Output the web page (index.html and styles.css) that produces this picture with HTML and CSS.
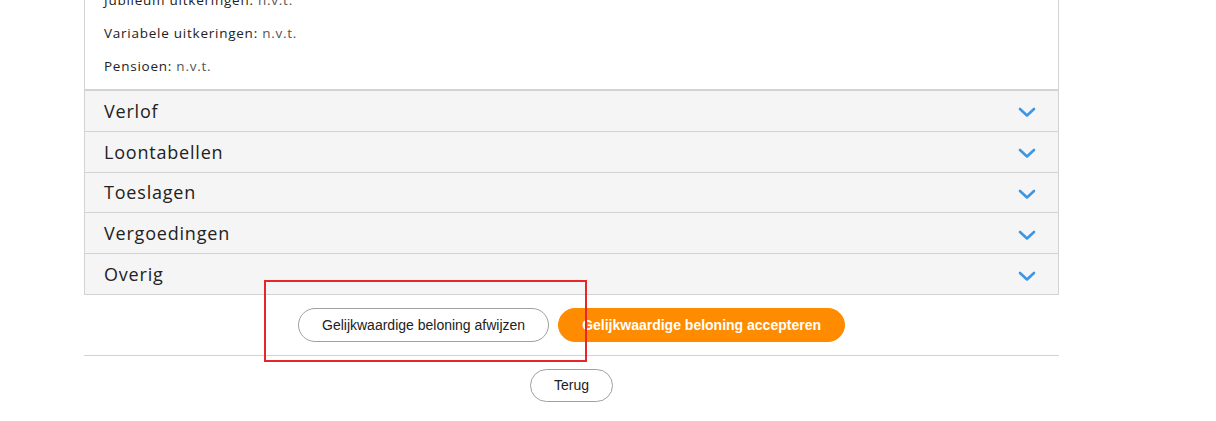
FILE: index.html
```html
<!DOCTYPE html>
<html lang="nl">
<head>
    <meta charset="UTF-8">
    <meta name="viewport" content="width=device-width, initial-scale=1.0">
    <title>Gelijkwaardige beloning</title>
    <link rel="stylesheet" href="styles.css">
</head>
<body>
    <div class="page">
        <!-- Overzicht met uitklapbare secties -->
        <div class="panel">
            <div class="details">
                <p>Jubileum uitkeringen: <span class="value">n.v.t.</span></p>
                <p>Variabele uitkeringen: <span class="value">n.v.t.</span></p>
                <p>Pensioen: <span class="value">n.v.t.</span></p>
            </div>
            <div class="section">
                <span>Verlof</span>
                <svg class="chevron" viewBox="0 0 18 11"><polyline points="2,2 9,8.5 16,2"/></svg>
            </div>
            <div class="section">
                <span>Loontabellen</span>
                <svg class="chevron" viewBox="0 0 18 11"><polyline points="2,2 9,8.5 16,2"/></svg>
            </div>
            <div class="section">
                <span>Toeslagen</span>
                <svg class="chevron" viewBox="0 0 18 11"><polyline points="2,2 9,8.5 16,2"/></svg>
            </div>
            <div class="section">
                <span>Vergoedingen</span>
                <svg class="chevron" viewBox="0 0 18 11"><polyline points="2,2 9,8.5 16,2"/></svg>
            </div>
            <div class="section">
                <span>Overig</span>
                <svg class="chevron" viewBox="0 0 18 11"><polyline points="2,2 9,8.5 16,2"/></svg>
            </div>
        </div>

        <!-- Keuze -->
        <div class="actions">
            <button class="btn btn-outline">Gelijkwaardige beloning afwijzen</button>
            <button class="btn btn-primary">Gelijkwaardige beloning accepteren</button>
        </div>

        <div class="footer">
            <button class="btn btn-outline btn-small">Terug</button>
        </div>
    </div>

    <!-- Markering -->
    <div class="highlight"></div>
</body>
</html>
```
FILE: styles.css
```css
body {
    margin: 0;
    font-family: 'Liberation Sans', Arial, sans-serif;
    background: #fff;
    color: #222;
}
.page {
    width: 975px;
    margin-left: 84px;
}
.panel {
    border: 1px solid #d3d3d3;
    border-top: none;
    margin-top: -16px;
    font-family: 'Open Sans', sans-serif;
}
.details {
    padding: 0 19px 6px;
    border-bottom: 2px solid #d3d3d3;
}
.details p {
    margin: 0;
    height: 33px;
    line-height: 33px;
    font-size: 13.5px;
    letter-spacing: 0.75px;
    color: #222;
}
.details .value {
    color: #555;
}
.section {
    display: flex;
    justify-content: space-between;
    align-items: center;
    height: 39.8px;
    padding: 0 19px;
    background-color: #f5f5f5;
    border-bottom: 1px solid #d3d3d3;
    font-size: 18px;
    letter-spacing: 0.8px;
    color: #222;
}
.section:last-child {
    border-bottom: none;
}
.chevron {
    width: 18px;
    height: 11px;
    margin-right: 3px;
    margin-top: 4px;
    fill: none;
    stroke: #3d95e6;
    stroke-width: 2.6;
    stroke-linecap: round;
    stroke-linejoin: round;
}
.actions {
    display: flex;
    justify-content: center;
    gap: 9px;
    padding: 13px 0;
    border-bottom: 1px solid #d3d3d3;
}
.footer {
    display: flex;
    justify-content: center;
    padding-top: 13px;
}
.btn {
    height: 34px;
    padding: 0 23px;
    border-radius: 17px;
    font-family: 'Liberation Sans', Arial, sans-serif;
    font-size: 14px;
    cursor: pointer;
}
.btn-outline {
    background: #fff;
    border: 1px solid #a0a0a0;
    color: #222;
}
.btn-primary {
    background-color: #ff8c00;
    border: 1px solid #ff8c00;
    color: #fff;
    font-weight: bold;
}
.btn-small {
    height: 33px;
    padding: 0 23px;
}
.highlight {
    position: absolute;
    left: 264px;
    top: 280px;
    width: 319px;
    height: 78px;
    border: 2px solid #e8262a;
}
```
